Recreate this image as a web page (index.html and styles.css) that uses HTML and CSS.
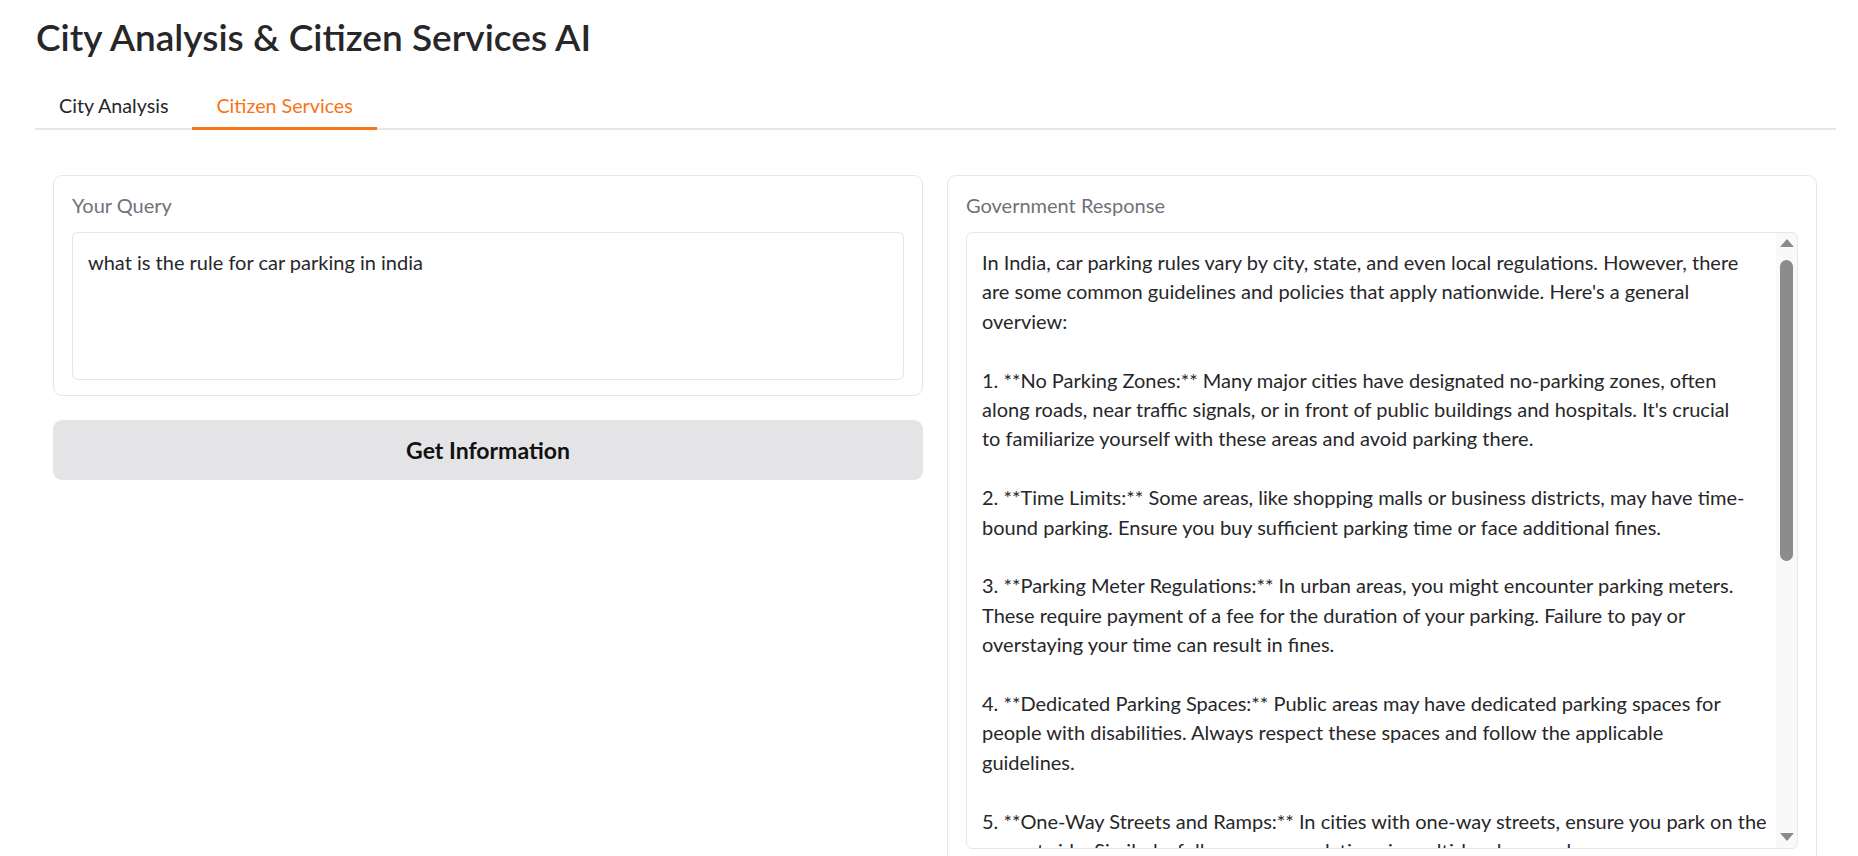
FILE: index.html
```html
<!DOCTYPE html>
<html lang="en">
<head>
<meta charset="utf-8">
<title>City Analysis &amp; Citizen Services AI</title>
<link rel="stylesheet" href="styles.css">
</head>
<body>
<div class="app">
  <h1 class="title">City Analysis &amp; Citizen Services AI</h1>
  <nav class="tabs">
    <button class="tab">City Analysis</button>
    <button class="tab tab-active">Citizen Services</button>
  </nav>
  <div class="panel">
    <div class="col">
      <div class="card">
        <div class="label">Your Query</div>
        <div class="input">what is the rule for car parking in india</div>
      </div>
      <button class="btn">Get Information</button>
    </div>
    <div class="col">
      <div class="card">
        <div class="label">Government Response</div>
        <div class="output">
          <div class="output-text">In India, car parking rules vary by city, state, and even local regulations. However, there
are some common guidelines and policies that apply nationwide. Here's a general
overview:

1. **No Parking Zones:** Many major cities have designated no-parking zones, often
along roads, near traffic signals, or in front of public buildings and hospitals. It's crucial
to familiarize yourself with these areas and avoid parking there.

2. **Time Limits:** Some areas, like shopping malls or business districts, may have time-
bound parking. Ensure you buy sufficient parking time or face additional fines.

3. **Parking Meter Regulations:** In urban areas, you might encounter parking meters.
These require payment of a fee for the duration of your parking. Failure to pay or
overstaying your time can result in fines.

4. **Dedicated Parking Spaces:** Public areas may have dedicated parking spaces for
people with disabilities. Always respect these spaces and follow the applicable
guidelines.

5. **One-Way Streets and Ramps:** In cities with one-way streets, ensure you park on the
correct side. Similarly, follow ramp regulations in multi-level car parks.</div>
          <div class="scrollbar">
            <div class="sb-btn"><span class="arrow-up"></span></div>
            <div class="sb-track"><div class="sb-thumb"></div></div>
            <div class="sb-btn"><span class="arrow-down"></span></div>
          </div>
        </div>
      </div>
    </div>
  </div>
</div>
</body>
</html>
```
FILE: styles.css
```css
html, body {
  margin: 0;
  padding: 0;
  background: #ffffff;
  overflow: hidden;
  height: 100%;
}
body {
  font-family: "Lato", "Liberation Sans", sans-serif;
  color: #27272a;
}
.app {
  padding: 0 22px 0 35px;
}
.title {
  margin: 15px 0 25px 1px;
  font-size: 37px;
  line-height: 44px;
  font-weight: 600;
  color: #27272a;
}
.tabs {
  display: flex;
  border-bottom: 2px solid #e5e7eb;
  height: 44px;
}
.tab {
  font-family: inherit;
  font-size: 19.7px;
  line-height: 31px;
  padding: 6px 24px;
  margin: 0 0 -2px 0;
  border: 0;
  border-bottom: 3px solid transparent;
  background: transparent;
  color: #27272a;
  cursor: pointer;
}
.tab-active {
  color: #f97316;
  border-bottom-color: #f97316;
}
.panel {
  display: grid;
  grid-template-columns: 1fr 1fr;
  column-gap: 24px;
  padding: 45px 19px 0 18px;
}
.col {
  display: flex;
  flex-direction: column;
  gap: 24px;
}
.card {
  border: 1px solid #e5e7eb;
  border-radius: 9px;
  padding: 15px 18px 15px 18px;
  background: #ffffff;
}
.label {
  font-size: 20px;
  line-height: 29.4px;
  color: #71717a;
  margin-bottom: 11.5px;
}
.input {
  border: 1px solid #e5e7eb;
  border-radius: 6px;
  padding: 15px 15px 13px 15px;
  font-size: 20px;
  line-height: 29.4px;
  height: 117.6px;
  color: #27272a;
}
.btn {
  height: 60px;
  border: 0;
  border-radius: 9px;
  background: #e4e4e7;
  font-family: inherit;
  font-size: 23px;
  font-weight: 700;
  color: #111111;
}
.output {
  display: flex;
  border: 1px solid #e5e7eb;
  border-radius: 6px;
  height: 615px;
  overflow: hidden;
}
.output-text {
  flex: 1;
  padding: 15px 0 0 15px;
  font-size: 20px;
  line-height: 29.4px;
  white-space: pre;
  color: #27272a;
  overflow: hidden;
}
.scrollbar {
  width: 21px;
  display: flex;
  flex-direction: column;
  background: #f9f9f9;
}
.sb-btn {
  height: 21px;
  display: flex;
  align-items: center;
  justify-content: center;
}
.arrow-up {
  width: 0;
  height: 0;
  border-left: 7px solid transparent;
  border-right: 7px solid transparent;
  border-bottom: 8px solid #8a8a8a;
}
.arrow-down {
  width: 0;
  height: 0;
  border-left: 7px solid transparent;
  border-right: 7px solid transparent;
  border-top: 8px solid #8a8a8a;
}
.sb-track {
  flex: 1;
  padding: 6px 4px 0 4px;
}
.sb-thumb {
  height: 301px;
  border-radius: 7px;
  background: #8c8c8c;
}
```
